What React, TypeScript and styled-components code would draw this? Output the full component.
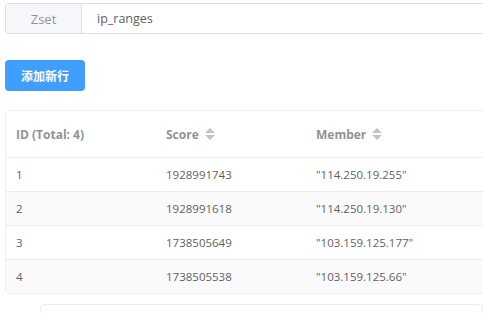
import styled, { createGlobalStyle } from 'styled-components'

const Global = createGlobalStyle`
  body {
    margin: 0;
    background: #fff;
    font-family: "Open Sans", "Noto Sans CJK SC", sans-serif;
    overflow: hidden;
  }
`

const Page = styled.div`
  width: 483px;
  height: 313px;
  overflow: hidden;
  padding: 3px 0 0 5px;
  box-sizing: border-box;
`

const InputGroup = styled.div`
  display: flex;
  width: 520px;
  height: 31px;
  border: 1px solid #dcdfe6;
  border-radius: 4px;
  box-sizing: border-box;
  overflow: hidden;
`

const Prepend = styled.div`
  width: 75px;
  display: flex;
  align-items: center;
  justify-content: center;
  background: #f5f7fa;
  border-right: 1px solid #dcdfe6;
  color: #909399;
  font-size: 13px;
`

const Value = styled.div`
  flex: 1;
  display: flex;
  align-items: center;
  padding-left: 15px;
  color: #606266;
  font-size: 12.5px;
`

const Button = styled.button`
  margin-top: 26px;
  width: 80px;
  height: 31px;
  border: none;
  border-radius: 4px;
  background: #409eff;
  color: #fff;
  font-family: "Noto Sans CJK SC", sans-serif;
  font-weight: 700;
  font-size: 12px;
  padding: 0;
  display: block;
`

const Table = styled.div`
  margin-top: 19px;
  width: 520px;
  border: 1px solid #ebeef5;
  border-radius: 4px;
  overflow: hidden;
`

const Row = styled.div<{ $striped?: boolean; $head?: boolean }>`
  display: grid;
  grid-template-columns: 150px 150px 1fr;
  height: ${(p) => (p.$head ? '46px' : '33px')};
  background: ${(p) => (p.$striped ? '#fafafa' : '#fff')};
  & + & {
    border-top: 1px solid #ebeef5;
  }
`

const Cell = styled.div<{ $head?: boolean }>`
  display: flex;
  align-items: center;
  padding-left: 10px;
  font-size: ${(p) => (p.$head ? '12px' : '11.5px')};
  color: ${(p) => (p.$head ? '#909399' : '#606266')};
  font-weight: ${(p) => (p.$head ? 700 : 400)};
`

const Caret = styled.span`
  display: inline-flex;
  flex-direction: column;
  gap: 2px;
  margin-left: 6px;
  &::before,
  &::after {
    content: '';
    border-left: 5px solid transparent;
    border-right: 5px solid transparent;
  }
  &::before {
    border-bottom: 5px solid #c0c4cc;
  }
  &::after {
    border-top: 5px solid #c0c4cc;
  }
`

const Footer = styled.div`
  margin: 10px 0 0 35px;
  height: 40px;
  border: 1px solid #ebeef5;
  border-radius: 4px;
`

const rows = [
  ['1', '1928991743', '"114.250.19.255"'],
  ['2', '1928991618', '"114.250.19.130"'],
  ['3', '1738505649', '"103.159.125.177"'],
  ['4', '1738505538', '"103.159.125.66"'],
]

export default function App() {
  return (
    <Page>
      <Global />
      <InputGroup>
        <Prepend>Zset</Prepend>
        <Value>ip_ranges</Value>
      </InputGroup>
      <Button>添加新行</Button>
      <Table>
        <Row $head>
          <Cell $head>ID (Total: 4)</Cell>
          <Cell $head>
            Score<Caret />
          </Cell>
          <Cell $head>
            Member<Caret />
          </Cell>
        </Row>
        {rows.map((r, i) => (
          <Row key={r[0]} $striped={i % 2 === 1}>
            {r.map((c, j) => (
              <Cell key={j}>{c}</Cell>
            ))}
          </Row>
        ))}
      </Table>
      <Footer />
    </Page>
  )
}
